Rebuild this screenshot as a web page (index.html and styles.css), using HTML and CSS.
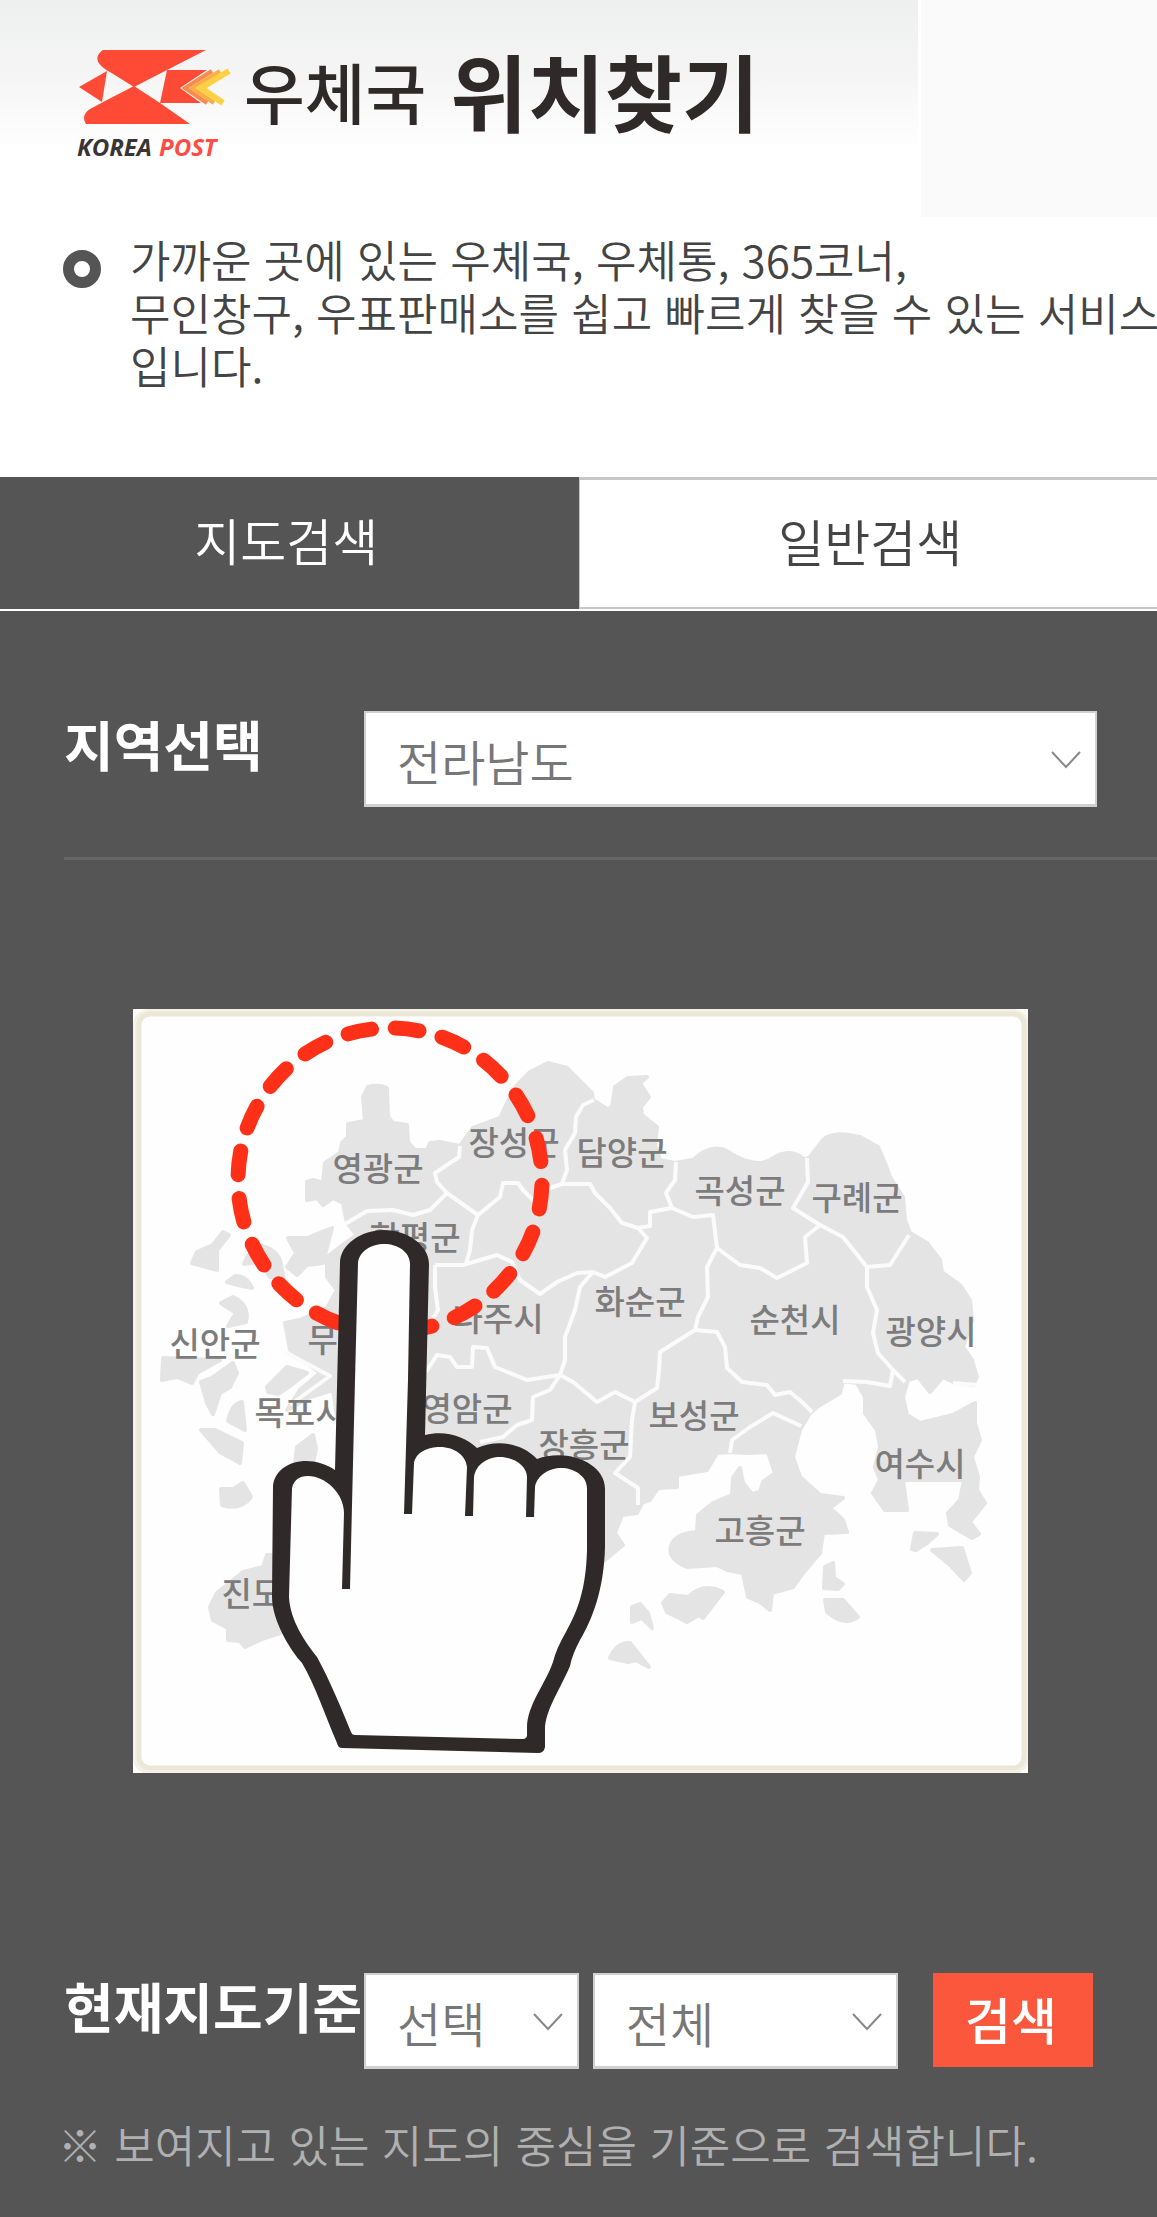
FILE: index.html
```html
<!DOCTYPE html>
<html lang="ko">
<head>
<meta charset="utf-8">
<meta name="viewport" content="width=device-width, initial-scale=1">
<title>우체국 위치찾기</title>
<link rel="stylesheet" href="styles.css">
</head>
<body>
<div class="page">
  <header class="header">
    <div class="brand">
      <svg class="logo" viewBox="76 46 160 114" role="img" aria-label="KOREA POST">
        <g fill="#ff4b36">
          <path d="M103 50H206L165 71L134 87L110 72C97 65 93 57 103 50Z"/>
          <path d="M134 86L160 103L190 124H86C82 118 84 112 92 108L105 101Z"/>
          <path d="M79 87L107 71L102 102Z"/>
          <path d="M167 70H207L180 88L201 103H160Z"/>
        </g>
        <g fill="none" stroke-width="4">
          <path stroke="#fa8a50" d="M212 71L185 88L207 103"/>
          <path stroke="#fbae45" d="M220 71L192 88L214 103"/>
          <path stroke="#ffd044" stroke-width="6" d="M229 71L201 88L223 103"/>
        </g>
        <text class="logo-text" x="77" y="156" fill="#3a3535">KOREA</text>
        <text class="logo-text" x="159" y="156" fill="#ff4b46">POST</text>
      </svg>
      <h1 class="title"><span class="title-small">우체국</span> <span class="title-large">위치찾기</span></h1>
    </div>
    <div class="header-side"></div>
  </header>

  <section class="intro">
    <span class="bullet"></span>
    <p class="intro-text">가까운 곳에 있는 우체국, 우체통, 365코너,<br>무인창구, 우표판매소를 쉽고 빠르게 찾을 수 있는 서비스<br>입니다.</p>
  </section>

  <nav class="tabs">
    <a class="tab tab-active" href="#map-search">지도검색</a>
    <a class="tab" href="#general-search">일반검색</a>
  </nav>

  <main class="panel" id="map-search">
    <div class="row row-region">
      <label class="label" for="region">지역선택</label>
      <div class="select-box">
        <select id="region"><option>전라남도</option></select>
        <svg class="chevron" viewBox="0 0 30 18"><path d="M1 1L15 16L29 1"/></svg>
      </div>
    </div>

    <svg class="map" viewBox="133 1009 895 764" role="img" aria-label="전라남도 지도">
      <rect x="133" y="1009" width="895" height="764" fill="#fffef8"/>
      <rect x="138" y="1014" width="886" height="755" rx="11" fill="#fefefe" stroke="#f4f1e6" stroke-width="10"/>
      <rect x="139" y="1014" width="885" height="754" rx="11" fill="#fefefe" stroke="#ece8d8" stroke-width="5"/>
      <g class="land">
        <path d="M368 1087Q378 1084 387 1088L388 1117L393 1123L407 1125L408 1142L415 1150L427 1150L430 1143L440 1142L460 1146L473 1128L500 1118L507 1103L517 1085L530 1072L548 1063L567 1068L577 1078L592 1093L593 1100L607 1109L612 1107L615 1087L628 1078L647 1077L640 1083L649 1097L641 1107L642 1115L657 1127L655 1145L660 1160L675 1163L693 1160Q715 1140 733 1155Q757 1168 770 1160Q790 1146 805 1160L810 1157L823 1140Q832 1130 860 1137L878 1147L885 1163L890 1177L903 1197L905 1220L910 1233L927 1243L940 1260L942 1272L960 1285L970 1300L972 1320L963 1347L972 1360L977 1377L973 1385L953 1382L943 1377L930 1392L918 1377L908 1380L903 1397L907 1415L920 1423L953 1415L975 1403L975 1423L980 1440L972 1457L978 1477L977 1490L985 1503L970 1522L979 1534L972 1538L950 1525L948 1513L960 1500L964 1480L903 1480L907 1510L885 1510L873 1493L880 1480L875 1467L880 1447L877 1430L865 1413L865 1397L857 1383L843 1381L840 1393L820 1405L810 1413L800 1430L793 1457L800 1477L820 1495L843 1498L830 1508L843 1520L847 1532L823 1533L820 1553L803 1573L793 1587L772 1593L770 1610L760 1602L748 1597L743 1573L727 1570L717 1565L687 1567Q665 1558 672 1543Q678 1533 697 1532L698 1515L713 1503L732 1495L733 1478L740 1468L743 1483L752 1494L760 1492L763 1482L775 1473L768 1452L747 1453L730 1452L717 1453L707 1470L677 1475L677 1487L658 1488L650 1500L642 1503L637 1513L622 1515L615 1533L623 1545L605 1560L560 1580L420 1480L342 1450L333 1390L310 1397L287 1410L300 1390L320 1373L290 1350L285 1323L300 1320L327 1308L337 1290L327 1277L327 1257L340 1247L357 1235L347 1223L343 1203L333 1198L323 1205L317 1198L307 1200L307 1182L313 1180L323 1183L325 1163L340 1153L342 1143L348 1137L348 1124L365 1121L363 1097Z"/>
        <path d="M192 1263L197 1252L213 1245L223 1232L229 1235L217 1250L217 1270Z"/>
        <path d="M288 1238L307 1238L332 1228L327 1247L323 1263L307 1265L297 1275L287 1267L296 1253Z"/>
        <path d="M244 1264Q250 1248 262 1246Q276 1250 280 1260L284 1280L270 1277L260 1262Z"/>
        <path d="M227 1282L235 1276Q247 1276 252 1288L238 1285Z"/>
        <path d="M221 1303L233 1297Q250 1305 246 1322L228 1326L236 1313Z"/>
        <path d="M163 1358L220 1360L197 1373L192 1383L177 1377L162 1380Z"/>
        <path d="M233 1363L237 1373L230 1387L220 1393L213 1414L207 1403L201 1382L212 1378Z"/>
        <path d="M267 1387L287 1367L307 1373L290 1386L278 1394L268 1392Z"/>
        <path d="M229 1418Q232 1404 242 1402L245 1430L228 1421Z"/>
        <path d="M201 1430L215 1430L242 1443L240 1463L220 1452Z"/>
        <path d="M221 1489L233 1489L243 1483L251 1497Q240 1511 222 1505Z"/>
        <path d="M295 1465L297 1447L313 1435L316 1448L313 1463Z"/>
        <path d="M210 1607L217 1593L243 1572L263 1567L267 1555L300 1555L300 1625L280 1633L262 1639L245 1647L240 1641L228 1640L228 1628L213 1620Z"/>
        <path d="M663 1603L670 1595L688 1597Q704 1582 723 1592L703 1618L699 1615L687 1622L667 1612Z"/>
        <path d="M632 1607L640 1604L648 1613L652 1628L642 1618L632 1622Z"/>
        <path d="M610 1658Q616 1643 630 1643L638 1653L649 1667L636 1660L628 1662Z"/>
        <path d="M825 1567L833 1563L834 1578L843 1584L838 1589L824 1588Z"/>
        <path d="M825 1600L843 1600L858 1617Q845 1627 827 1612Z"/>
        <path d="M912 1549L915 1533L937 1534L927 1543L916 1550Z"/>
        <path d="M932 1550L962 1548L970 1573L964 1580L950 1565Z"/>
      </g>
      <g class="borders">
        <path d="M460 1146L459 1157L435 1173L437 1182L447 1193L478 1215"/>
        <path d="M447 1193L430 1210L413 1215L393 1210L367 1211L345 1224"/>
        <path d="M594 1100L583 1105L576 1117L575 1133L565 1150L567 1170L562 1184L550 1188L533 1200L523 1190L518 1183L503 1183L500 1197L478 1215L472 1230L470 1250L466 1264"/>
        <path d="M435 1265L463 1265L497 1255L512 1262L520 1280L540 1294L557 1282L577 1273L593 1272L605 1277L632 1263L647 1238L638 1228L622 1223L610 1208L595 1193L590 1184L562 1184"/>
        <path d="M638 1228L650 1226L650 1212L672 1208L666 1193L675 1180L676 1162"/>
        <path d="M672 1208L693 1217L713 1215L717 1248L740 1265L760 1268L777 1278L807 1263L805 1237L820 1225L793 1208L808 1182L807 1158"/>
        <path d="M820 1225L843 1237L867 1267L890 1265L909 1235"/>
        <path d="M867 1267L867 1287L877 1310L873 1333L878 1353L893 1370L905 1382M893 1370L890 1386L867 1382L843 1381"/>
        <path d="M717 1248L707 1267L708 1297L698 1317L695 1330L717 1332L725 1347L727 1368L742 1382L767 1385L775 1395L790 1392L803 1403L812 1412"/>
        <path d="M695 1330L660 1352L659 1370L657 1388L635 1402L615 1392L597 1402L573 1382L560 1375L565 1360L565 1337L575 1310L580 1287L592 1273"/>
        <path d="M635 1402L632 1420L630 1457L615 1473L638 1488L638 1505"/>
        <path d="M435 1265L435 1287L438 1310L428 1327M426 1372L437 1355L450 1357L457 1367L472 1367L473 1347L487 1348L495 1367L527 1380L560 1375L550 1390L533 1397L532 1420L517 1425L503 1437L480 1442"/>
        <path d="M730 1453L732 1440L750 1427L773 1413L801 1426M953 1383L977 1385M285 1352L330 1376L290 1405"/>
      </g>
      <g class="names">
        <text x="378" y="1181">영광군</text>
        <text x="514" y="1155">장성군</text>
        <text x="622" y="1165">담양군</text>
        <text x="740" y="1203">곡성군</text>
        <text x="857" y="1210">구례군</text>
        <text x="415" y="1250">함평군</text>
        <text x="640" y="1314">화순군</text>
        <text x="795" y="1332">순천시</text>
        <text x="931" y="1344">광양시</text>
        <text x="215" y="1356">신안군</text>
        <text x="353" y="1352">무안군</text>
        <text x="498" y="1331">나주시</text>
        <text x="300" y="1425">목포시</text>
        <text x="467" y="1421">영암군</text>
        <text x="584" y="1457">장흥군</text>
        <text x="694" y="1428">보성군</text>
        <text x="760" y="1543">고흥군</text>
        <text x="920" y="1476">여수시</text>
        <text x="267" y="1606">진도군</text>
      </g>
      <circle class="ring" cx="390" cy="1180" r="152" pathLength="200" transform="rotate(2 390 1180)"/>
      <path fill="#2f2929" d="M335 1470L340 1263C340 1244 362 1230 384 1230C407 1230 429 1245 429 1264L425 1435C445 1430 464 1436 477 1448C497 1439 522 1443 537 1459C567 1448 606 1463 605 1490V1547C604 1590 592 1620 580 1640Q572 1655 570 1666C560 1690 545 1710 545 1730V1747Q544 1753 538 1753L342 1748Q338 1748 337 1743C325 1715 315 1685 302 1663C290 1650 272 1620 272 1597L273 1487C274 1463 308 1452 335 1470Z"/>
      <path fill="#fefefe" d="M292 1488C294 1480 299 1476 308 1476C325 1476 344 1493 344 1513L342 1589H350L355 1380L358 1263C359 1251 372 1244 384 1244C398 1244 410 1252 410 1264L408 1380L404 1514H412L414 1463C416 1452 428 1447 440 1447C455 1447 466 1456 467 1467L465 1516H473L474 1477C476 1464 488 1457 500 1457C514 1457 527 1466 527 1477L526 1517H534L535 1487C537 1475 550 1468 561 1468C574 1468 587 1476 587 1488V1550C586 1590 577 1612 567 1630Q556 1649 553 1662C545 1685 527 1705 527 1728V1736Q526 1739 523 1739L355 1735Q352 1735 351 1732C340 1705 330 1681 317 1657C305 1642 290 1620 289 1597Z"/>
    </svg>

    <div class="row row-search">
      <label class="label" for="scope">현재지도기준</label>
      <div class="fields">
        <div class="select-box scope">
          <select id="scope"><option>선택</option></select>
          <svg class="chevron" viewBox="0 0 30 18"><path d="M1 1L15 16L29 1"/></svg>
        </div>
        <div class="select-box kind">
          <select id="kind" aria-label="종류"><option>전체</option></select>
          <svg class="chevron" viewBox="0 0 30 18"><path d="M1 1L15 16L29 1"/></svg>
        </div>
        <button class="search" type="button">검색</button>
      </div>
    </div>
    <p class="note">※ 보여지고 있는 지도의 중심을 기준으로 검색합니다.</p>
  </main>
</div>
</body>
</html>
```
FILE: styles.css
```css
* { box-sizing: border-box; }

body {
  margin: 0;
  background: #fff;
  color: #444;
  font-family: "Noto Sans CJK KR", sans-serif;
  font-weight: 350;
}

.page { overflow: hidden; }

.header {
  display: flex;
  gap: 3px;
  height: 217px;
}

.brand {
  flex: 1;
  display: flex;
  align-items: flex-start;
  gap: 8px;
  padding: 46px 0 0 76px;
  background: linear-gradient(#eeefef, #f5f5f5 35%, #fff 70%);
}

.logo { flex: none; width: 160px; height: 114px; overflow: visible; }

.logo-text { font: italic 700 24px "Open Sans", sans-serif; }

.header-side { width: 236px; background: #fafafa; }

.title {
  display: flex;
  align-items: center;
  gap: 24px;
  margin: 0;
  color: #2f2929;
  font-weight: 700;
  line-height: 88px;
  white-space: nowrap;
}

.title-small { font-size: 66px; font-weight: 500; }
.title-large { font-size: 84px; }

.intro {
  display: flex;
  gap: 29px;
  padding: 16px 0 85px 63px;
}

.bullet {
  flex: none;
  width: 38px;
  height: 38px;
  margin-top: 17px;
  border: 11px solid #555;
  border-radius: 50%;
}

.intro-text {
  margin: 0;
  font-size: 44px;
  line-height: 53px;
  white-space: nowrap;
}

.tabs {
  display: grid;
  grid-template-columns: 1fr 1fr;
  height: 132px;
  margin-bottom: 2px;
}

.tab {
  display: flex;
  align-items: center;
  justify-content: center;
  padding: 0 0 8px 4px;
  border: solid #c6c6c6;
  border-width: 3px 0 2px 1px;
  color: #444;
  font-size: 50px;
  text-decoration: none;
}

.tab-active {
  padding: 0 6px 8px 0;
  border: 0;
  background: #555;
  color: #fff;
}

.panel {
  padding: 100px 0 46px;
  background: #555;
}

.row {
  display: grid;
  grid-template-columns: 300px 1fr;
  margin-left: 64px;
}

.row-region {
  padding: 0 60px 50px 0;
  border-bottom: 3px solid #666;
}

.row-search { padding-right: 64px; }

.label {
  color: #fff;
  font-size: 54px;
  font-weight: 700;
  line-height: 66px;
  white-space: nowrap;
}

.fields { display: flex; gap: 14px; }

.select-box { position: relative; height: 96px; }

.select-box select {
  appearance: none;
  width: 100%;
  height: 100%;
  padding: 2px 60px 0 31px;
  border: solid #d0d0d0;
  border-width: 2px 2px 3px;
  border-radius: 0;
  background: #fff;
  color: #777;
  font: inherit;
  font-size: 48px;
}

.chevron {
  position: absolute;
  top: 40px;
  right: 16px;
  width: 30px;
  height: 18px;
  fill: none;
  stroke: #888;
  stroke-width: 2;
  pointer-events: none;
}

.scope { flex: 216; }
.kind { flex: 307; }

.search {
  flex: 157;
  height: 94px;
  margin-left: 21px;
  padding: 0 4px 4px 0;
  border: 0;
  background: #fa573c;
  color: #fff;
  font: inherit;
  font-size: 50px;
  font-weight: 500;
}

.map {
  display: block;
  width: calc(100% - 262px);
  margin: 149px 129px 200px 133px;
}

.land { fill: #e4e4e4; stroke: #e4e4e4; stroke-width: 4; stroke-linejoin: round; }
.borders { fill: none; stroke: #fbfbfb; stroke-width: 4; stroke-linejoin: round; }
.names { fill: #7c7c7c; font-size: 33px; font-weight: 500; text-anchor: middle; }
.ring { fill: none; stroke: #ff3018; stroke-width: 15; stroke-linecap: round; stroke-dasharray: 5 5; }

.note {
  margin: 49px 0 0 58px;
  color: #b0b0b0;
  font-size: 44px;
  line-height: 53px;
  white-space: nowrap;
}
```
